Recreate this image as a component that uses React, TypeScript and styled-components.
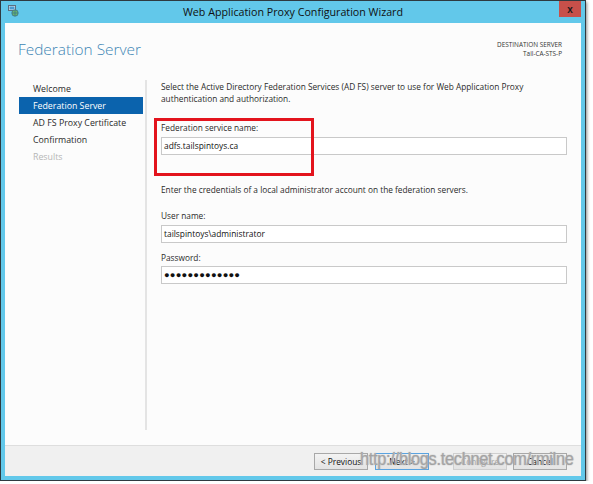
import React from 'react';
import styled, { createGlobalStyle } from 'styled-components';

const GlobalStyle = createGlobalStyle`
  html, body {
    margin: 0;
    padding: 0;
    background: #ffffff;
  }
  body {
    font-family: 'Open Sans', 'Liberation Sans', sans-serif;
  }
`;

const ui = {
  frame: '#62c8ea',
  frameDark: '#2e3a40',
  accent: '#3d86b5',
  selected: '#0b63ad',
  text: '#2a2a2a',
  muted: '#b6b6b6',
  inputBorder: '#c9c9c9',
  footer: '#f0f0f0',
};

const Window = styled.div`
  position: relative;
  width: 586px;
  height: 481px;
  box-sizing: border-box;
  border: 1px solid ${ui.frameDark};
  background: ${ui.frame};
  box-shadow: 1px 2px 3px rgba(0, 0, 0, 0.45);
  display: flex;
  flex-direction: column;
  padding: 0 4px 4px 4px;
`;

const TitleBar = styled.div`
  height: 22px;
  display: flex;
  align-items: center;
  justify-content: center;
  position: relative;
  font-size: 10.7px;
  color: #101010;
`;

const AppIcon = styled.svg`
  position: absolute;
  left: 3px;
  top: 4px;
`;

const CloseButton = styled.div`
  position: absolute;
  right: 0;
  top: 0;
  width: 22px;
  height: 16px;
  background: #c7504a;
  color: #1a1a1a;
  font-size: 10px;
  font-weight: 700;
  display: flex;
  align-items: center;
  justify-content: center;
  font-family: 'Liberation Sans', sans-serif;
`;

const Client = styled.div`
  flex: 1;
  background: #fcfcfc;
  display: flex;
  flex-direction: column;
  position: relative;
`;

const Header = styled.div`
  height: 57px;
  display: flex;
  justify-content: space-between;
  align-items: flex-start;
  padding: 0 19px 0 13px;
`;

const PageTitle = styled.h1`
  margin: 16px 0 0;
  font-size: 15.4px;
  font-weight: 300;
  color: ${ui.accent};
`;

const Destination = styled.div`
  margin-top: 17px;
  text-align: right;
  font-size: 6.4px;
  line-height: 9px;
  color: #333;
`;

const Main = styled.div`
  flex: 1;
  display: flex;
  padding: 0 14px 15px 14px;
`;

const Sidebar = styled.ul`
  list-style: none;
  margin: 0;
  padding: 0;
  width: 124px;
  margin-right: 2px;
`;

const Step = styled.li<{ $state: 'done' | 'active' | 'todo' | 'disabled' }>`
  height: 17px;
  line-height: 18px;
  padding-left: 14px;
  font-size: 8.8px;
  background: ${(p) => (p.$state === 'active' ? ui.selected : 'transparent')};
  color: ${(p) =>
    p.$state === 'active' ? '#ffffff' : p.$state === 'disabled' ? ui.muted : ui.text};
`;

const Divider = styled.div`
  width: 2px;
  background: #e4e4e4;
`;

const Content = styled.div`
  flex: 1;
  padding-left: 14px;
  padding-top: 1px;
  font-size: 8.3px;
  line-height: 12px;
  color: ${ui.text};
`;

const Para = styled.p<{ $top?: number }>`
  margin: ${(p) => p.$top ?? 0}px 0 0;
`;

const Field = styled.div<{ $top: number }>`
  position: relative;
  margin-top: ${(p) => p.$top}px;
`;

const Label = styled.div<{ $gap?: number }>`
  margin-bottom: ${(p) => p.$gap ?? 3}px;
`;

const TextBox = styled.div<{ $secret?: boolean }>`
  height: 18px;
  box-sizing: border-box;
  border: 1px solid ${ui.inputBorder};
  background: #ffffff;
  padding-left: 2px;
  display: flex;
  align-items: center;
  color: #111;
  font-size: ${(p) => (p.$secret ? '9.4px' : '8.4px')};
  letter-spacing: ${(p) => (p.$secret ? '0.2px' : '0')};
`;

const Callout = styled.div`
  position: absolute;
  left: -7px;
  top: -4px;
  width: 160px;
  height: 58px;
  box-sizing: border-box;
  border: 3px solid #e3141d;
`;

const Footer = styled.div`
  height: 31px;
  box-sizing: border-box;
  border-top: 1px solid #dedede;
  background: ${ui.footer};
  display: flex;
  justify-content: flex-end;
  align-items: flex-start;
  padding: 7px 14px 0 0;
`;

const Button = styled.div<{ $primary?: boolean; $disabled?: boolean; $gap?: number }>`
  width: 54px;
  height: 17px;
  box-sizing: border-box;
  margin-left: ${(p) => p.$gap ?? 6}px;
  border: 1px solid ${(p) => (p.$primary ? '#5aa3e0' : p.$disabled ? '#cfcfcf' : '#a8a8a8')};
  background: linear-gradient(#f3f3f3, #e3e3e3);
  color: ${(p) => (p.$disabled ? '#a6a6a6' : '#111')};
  font-size: 8.4px;
  display: flex;
  align-items: center;
  justify-content: center;
`;

const Watermark = styled.div`
  position: absolute;
  left: 359px;
  top: 447px;
  font-family: 'Liberation Sans', Arial, sans-serif;
  font-size: 18.5px;
  color: #a2a2a2;
  letter-spacing: -0.3px;
  white-space: nowrap;
  transform: scaleX(0.88);
  transform-origin: left top;
  text-shadow: 0 0 1px #ffffff, 0 0 1px #555;
  pointer-events: none;
`;

const steps: { name: string; state: 'done' | 'active' | 'todo' | 'disabled' }[] = [
  { name: 'Welcome', state: 'done' },
  { name: 'Federation Server', state: 'active' },
  { name: 'AD FS Proxy Certificate', state: 'todo' },
  { name: 'Confirmation', state: 'todo' },
  { name: 'Results', state: 'disabled' },
];

const App = () => (
  <>
    <GlobalStyle />
    <Window>
      <TitleBar>
        <AppIcon width="11" height="12" viewBox="0 0 11 12">
          <rect x="0.5" y="0.5" width="7" height="5" fill="#d9e4ec" stroke="#5b6f80" />
          <rect x="1.5" y="1.5" width="5" height="3" fill="#4a9bd0" />
          <circle cx="7" cy="8" r="3.2" fill="#6bb46a" stroke="#3c6f8c" strokeWidth="0.8" />
          <path d="M4 8h6M7 5v6" stroke="#2d6a9a" strokeWidth="0.6" />
        </AppIcon>
        Web Application Proxy Configuration Wizard
        <CloseButton>x</CloseButton>
      </TitleBar>
      <Client>
        <Header>
          <PageTitle>Federation Server</PageTitle>
          <Destination>
            DESTINATION SERVER
            <br />
            Tail-CA-STS-P
          </Destination>
        </Header>
        <Main>
          <Sidebar>
            {steps.map((s) => (
              <Step key={s.name} $state={s.state}>
                {s.name}
              </Step>
            ))}
          </Sidebar>
          <Divider />
          <Content>
            <Para>
              Select the Active Directory Federation Services (AD FS) server to use for Web Application Proxy
              authentication and authorization.
            </Para>
            <Field $top={17}>
              <Callout />
              <Label>Federation service name:</Label>
              <TextBox>adfs.tailspintoys.ca</TextBox>
            </Field>
            <Para $top={29}>Enter the credentials of a local administrator account on the federation servers.</Para>
            <Field $top={14}>
              <Label>User name:</Label>
              <TextBox>tailspintoys\administrator</TextBox>
            </Field>
            <Field $top={9}>
              <Label $gap={2}>Password:</Label>
              <TextBox $secret>●●●●●●●●●●●●●</TextBox>
            </Field>
          </Content>
        </Main>
        <Footer>
          <Button>&lt; Previous</Button>
          <Button $primary $gap={7}>
            Next &gt;
          </Button>
          <Button $disabled $gap={24}>
            Configure
          </Button>
          <Button>Cancel</Button>
        </Footer>
      </Client>
      <Watermark>http://blogs.technet.com/rmilne</Watermark>
    </Window>
  </>
);

export default App;
